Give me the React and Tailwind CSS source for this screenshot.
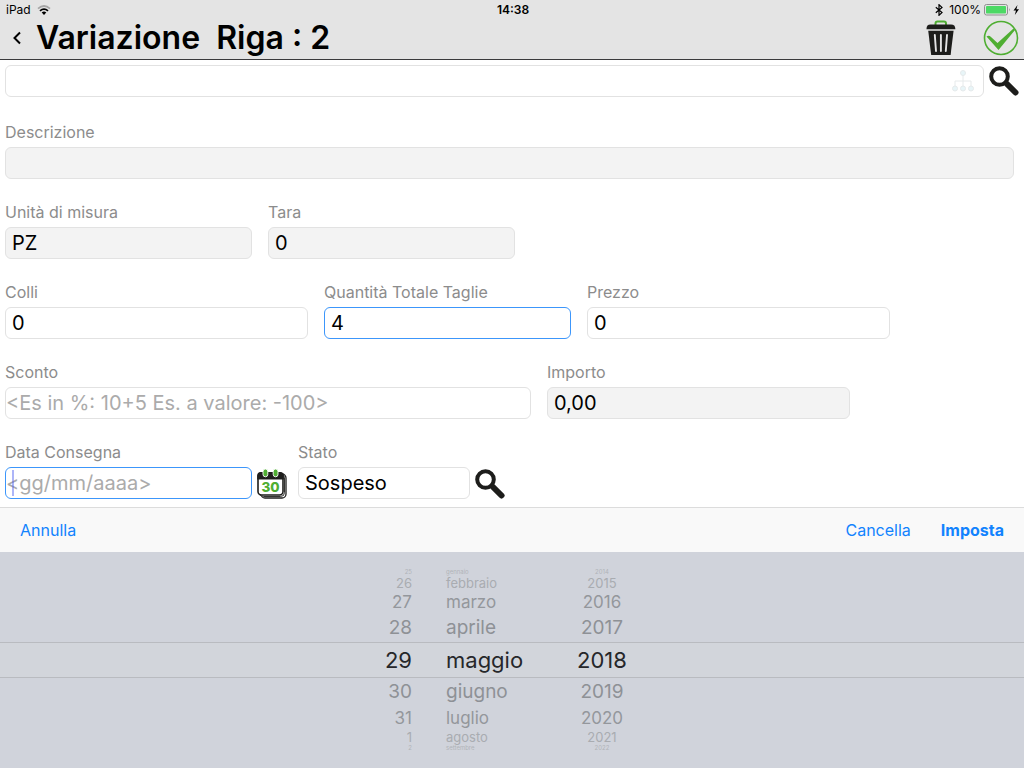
import React, { useState } from 'react';
import clsx from 'clsx';

const DAYS = ['25', '26', '27', '28', '29', '30', '31', '1', '2'];
const MONTHS = ['gennaio', 'febbraio', 'marzo', 'aprile', 'maggio', 'giugno', 'luglio', 'agosto', 'settembre'];
const YEARS = ['2014', '2015', '2016', '2017', '2018', '2019', '2020', '2021', '2022'];

// Row look by position in the wheel, the middle one is the selected one
const WHEEL_ROWS = [
  'leading-[8px] text-[6px] text-[#b0b3b9]',
  'leading-[14px] text-[13px] text-[#a9acb1]',
  'leading-[24px] text-[17px] text-[#94979c]',
  'leading-[28px] text-[19px] text-[#8e9196]',
  'leading-[36px] text-[22px] text-[#26272a]',
  'leading-[28px] text-[19px] text-[#8e9196]',
  'leading-[24px] text-[17px] text-[#94979c]',
  'leading-[14px] text-[13px] text-[#a9acb1]',
  'leading-[8px] text-[6px] text-[#b0b3b9]'
];

function TrashIcon() {
  return (
    <svg viewBox="0 0 30 36" className="w-[30px] h-9">
      <path d="M9.500 5V3.500Q9.500 1.500 11.500 1.500H18Q20 1.500 20 3.500V5" fill="none" stroke="#4fae32" strokeWidth="2" />
      <path d="M0.500 8.800Q0.500 4.500 4.500 4.500H25Q29.300 4.500 29.300 8.800V9.300H0.500Z" fill="#1d1d1b" />
      <path d="M2.200 10.800H27.600L24.600 35H5.200Z" fill="#1d1d1b" />
      <path d="M8.800 15L10 31M14.900 15V31M21 15L19.800 31" stroke="#e4e4e4" strokeWidth="1.900" strokeLinecap="round" />
    </svg>
  );
}

function ConfirmIcon() {
  return (
    <svg viewBox="0 0 36 36" className="w-9 h-9">
      <circle cx="18" cy="18" r="16.500" fill="none" stroke="#4fae32" strokeWidth="1.600" />
      <path d="M3.500 16.500Q6 15 8 17L14.500 23L30.500 8.500L32 10L15.500 30Z" fill="#4fae32" />
    </svg>
  );
}

function SearchIcon() {
  return (
    <svg viewBox="0 0 30 30" className="w-[30px] h-[30px]">
      <circle cx="10.500" cy="10.500" r="8.300" fill="none" stroke="#1d1d1b" strokeWidth="4" />
      <path d="M18 18L26.500 26.500" stroke="#1d1d1b" strokeWidth="6" strokeLinecap="round" />
    </svg>
  );
}

function HierarchyIcon() {
  return (
    <svg viewBox="0 0 22 22" className="w-[22px] h-[22px]" fill="#e8f5f8" stroke="#e6eaeb">
      <path d="M11 5V16M3 16V11H19V16" fill="none" />
      <circle cx="11" cy="3" r="2.500" />
      <circle cx="3" cy="18.500" r="2.500" />
      <circle cx="11" cy="18.500" r="2.500" />
      <circle cx="19" cy="18.500" r="2.500" />
    </svg>
  );
}

function CalendarIcon() {
  return (
    <svg viewBox="0 0 30 30" className="w-[30px] h-[30px]">
      <rect x="4" y="5" width="25" height="24" rx="4" fill="#fff" stroke="#1d1d1b" strokeWidth="1.300" />
      <rect x="2.500" y="4.500" width="25" height="23" rx="4" fill="#fff" stroke="#1d1d1b" strokeWidth="0.900" />
      <rect x="1" y="4" width="25" height="22" rx="3.500" fill="#fff" stroke="#1d1d1b" strokeWidth="1.600" />
      <path d="M0.200 10.500V6.500Q0.200 3 3.700 3H23.300Q26.800 3 26.800 6.500V10.500Z" fill="#1d1d1b" />
      <rect x="6" y="0" width="4.800" height="7.800" rx="2.400" fill="#4fae32" stroke="#fff" strokeWidth="0.900" />
      <rect x="16.200" y="0" width="4.800" height="7.800" rx="2.400" fill="#4fae32" stroke="#fff" strokeWidth="0.900" />
      <text x="13.500" y="22.500" textAnchor="middle" fontFamily="Inter, sans-serif" fontSize="13.500" fontWeight="800" fill="#4fae32">30</text>
    </svg>
  );
}

function StatusBar() {
  return (
    <div className="h-5 grid grid-cols-3 items-center pl-1.5 pr-1 text-xs">
      <div className="flex items-center gap-1.5">
        <span>iPad</span>
        <svg viewBox="0 0 14 10" className="w-3.5 h-2.5" fill="none" strokeWidth="1.800">
          <path d="M1 3.600Q7 -1.600 13 3.600" stroke="#a5a5a5" />
          <path d="M3 5.900Q7 2.400 11 5.900" stroke="#000" />
          <path d="M4.700 7.500Q7 5.700 9.300 7.500L7 10Z" fill="#000" />
        </svg>
      </div>
      <div className="text-center font-semibold">14:38</div>
      <div className="flex items-center justify-end">
        <svg viewBox="0 0 8 12" className="w-2 h-3 mr-1.5" fill="none" stroke="#000" strokeWidth="1.200">
          <path d="M0.800 3.300L7 8.600L4 11.300V0.700L7 3.400L0.800 8.700" />
        </svg>
        <span>100%</span>
        <svg viewBox="0 0 36 12" className="w-9 h-3 ml-[3px]">
          <rect x="0.500" y="0.500" width="23" height="10.500" rx="2" fill="none" stroke="#8f8f8f" />
          <rect x="2" y="2" width="20" height="7.500" rx="0.800" fill="#4cd964" />
          <path d="M25 4Q26.600 5.750 25 7.500Z" fill="#8f8f8f" />
          <path d="M33.500 1L29.500 6.500H32L30.800 11L35 5.300H32.400Z" fill="#000" />
        </svg>
      </div>
    </div>
  );
}

function Field({ id, label, value, onChange, readOnly, active, placeholder }) {
  return (
    <div className="flex-1 min-w-0">
      <label htmlFor={id} className="block mb-[3px] leading-6 text-base text-[#8c8c8c] whitespace-nowrap">{label}</label>
      <div className="relative">
        <input
          id={id}
          type="text"
          value={value}
          readOnly={readOnly}
          placeholder={placeholder}
          onChange={e => onChange(id, e.target.value)}
          className={clsx(
            'block w-full h-8 border rounded-md outline-none text-xl text-black placeholder:text-[#ababab]',
            placeholder ? 'px-0' : 'px-1.5',
            readOnly ? 'bg-[#f3f3f3]' : 'bg-white',
            active ? 'border-[#3c96fb]' : 'border-[#e2e2e2]'
          )}
        />
        {active && placeholder && <span className="absolute left-[7px] top-[3px] w-0.5 h-[26px] bg-[#4a5cf0]/45" />}
      </div>
    </div>
  );
}

function Wheel({ label, items, className }) {
  return (
    <ul aria-label={label} className={className}>
      {items.map((item, i) => (
        <li key={item} className={WHEEL_ROWS[i]}>{item}</li>
      ))}
    </ul>
  );
}

export default function App() {
  const [riga, setRiga] = useState({
    articolo: '',
    descrizione: '',
    um: 'PZ',
    tara: '0',
    colli: '0',
    quantita: '4',
    prezzo: '0',
    sconto: '',
    importo: '0,00',
    dataConsegna: '',
    stato: 'Sospeso'
  });

  const handleChange = (key, value) => setRiga({ ...riga, [key]: value });
  const field = (key) => ({ id: key, value: riga[key], onChange: handleChange });

  return (
    <div className="min-h-screen flex flex-col bg-white text-black font-['Inter','Liberation_Sans',sans-serif]">
      <header className="bg-[#e4e4e4] border-b border-[#3a3a3c]">
        <StatusBar />
        <div className="h-[39px] flex items-center pl-3 pr-[5px] pb-1">
          <button type="button" aria-label="Indietro" className="mr-3.5">
            <svg viewBox="0 0 10 14" className="w-2.5 h-3.5" fill="none" stroke="#000" strokeWidth="2">
              <path d="M8 1.500L2.500 7L8 12.500" />
            </svg>
          </button>
          <h1 className="flex-1 text-[32px] leading-9 font-semibold whitespace-pre">{'Variazione  Riga : 2'}</h1>
          <button type="button" aria-label="Elimina" className="mr-[27px]"><TrashIcon /></button>
          <button type="button" aria-label="Conferma"><ConfirmIcon /></button>
        </div>
      </header>

      <main className="pl-[5px] pr-2.5 pt-[5px] pb-2">
        <div className="flex items-center gap-[5px] -mr-[5px]">
          <div className="relative flex-1">
            <input
              type="text"
              aria-label="Articolo"
              value={riga.articolo}
              onChange={e => handleChange('articolo', e.target.value)}
              className="block w-full h-8 px-1.5 border border-[#e2e2e2] rounded-md outline-none text-xl"
            />
            <span className="absolute right-2.5 top-[5px]"><HierarchyIcon /></span>
          </div>
          <button type="button" aria-label="Cerca articolo"><SearchIcon /></button>
        </div>

        <div className="mt-[23px] flex flex-col gap-[21px]">
          <Field label="Descrizione" readOnly {...field('descrizione')} />

          <div className="grid grid-cols-[247fr_247fr_483fr] gap-4">
            <Field label="Unità di misura" readOnly {...field('um')} />
            <Field label="Tara" readOnly {...field('tara')} />
          </div>

          <div className="grid grid-cols-[303fr_247fr_303fr_108fr] gap-4">
            <Field label="Colli" {...field('colli')} />
            <Field label="Quantità Totale Taglie" active {...field('quantita')} />
            <Field label="Prezzo" {...field('prezzo')} />
          </div>

          <div className="grid grid-cols-[526fr_303fr_148fr] gap-4">
            <Field label="Sconto" placeholder="<Es in %: 10+5 Es. a valore: -100>" {...field('sconto')} />
            <Field label="Importo" readOnly {...field('importo')} />
          </div>

          <div className="grid grid-cols-[282fr_207fr_498fr] gap-[11px]">
            <div className="flex items-end gap-[5px]">
              <Field label="Data Consegna" active placeholder="<gg/mm/aaaa>" {...field('dataConsegna')} />
              <button type="button" aria-label="Apri calendario"><CalendarIcon /></button>
            </div>
            <div className="flex items-end gap-[5px]">
              <Field label="Stato" {...field('stato')} />
              <button type="button" aria-label="Cerca stato"><SearchIcon /></button>
            </div>
          </div>
        </div>
      </main>

      <div className="h-[45px] flex items-center px-5 bg-[#f9f9f9] border-t border-[#dcdcdc] text-base text-[#1283fe]">
        <button type="button">Annulla</button>
        <button type="button" className="ml-auto mr-[30px]">Cancella</button>
        <button type="button" className="font-bold">Imposta</button>
      </div>

      <section aria-label="Data" className="relative flex-1 py-4 bg-[#d0d3db]">
        <div className="absolute inset-x-0 top-[90px] h-9 border-y border-[#b9bbc0] bg-[#d2d5db]" />
        <div className="relative flex justify-center gap-[34px] pr-12">
          <Wheel label="Giorno" items={DAYS} className="w-16 text-right" />
          <Wheel label="Mese" items={MONTHS} className="w-24" />
          <Wheel label="Anno" items={YEARS} className="w-[52px] text-center whitespace-nowrap" />
        </div>
      </section>
    </div>
  );
}
